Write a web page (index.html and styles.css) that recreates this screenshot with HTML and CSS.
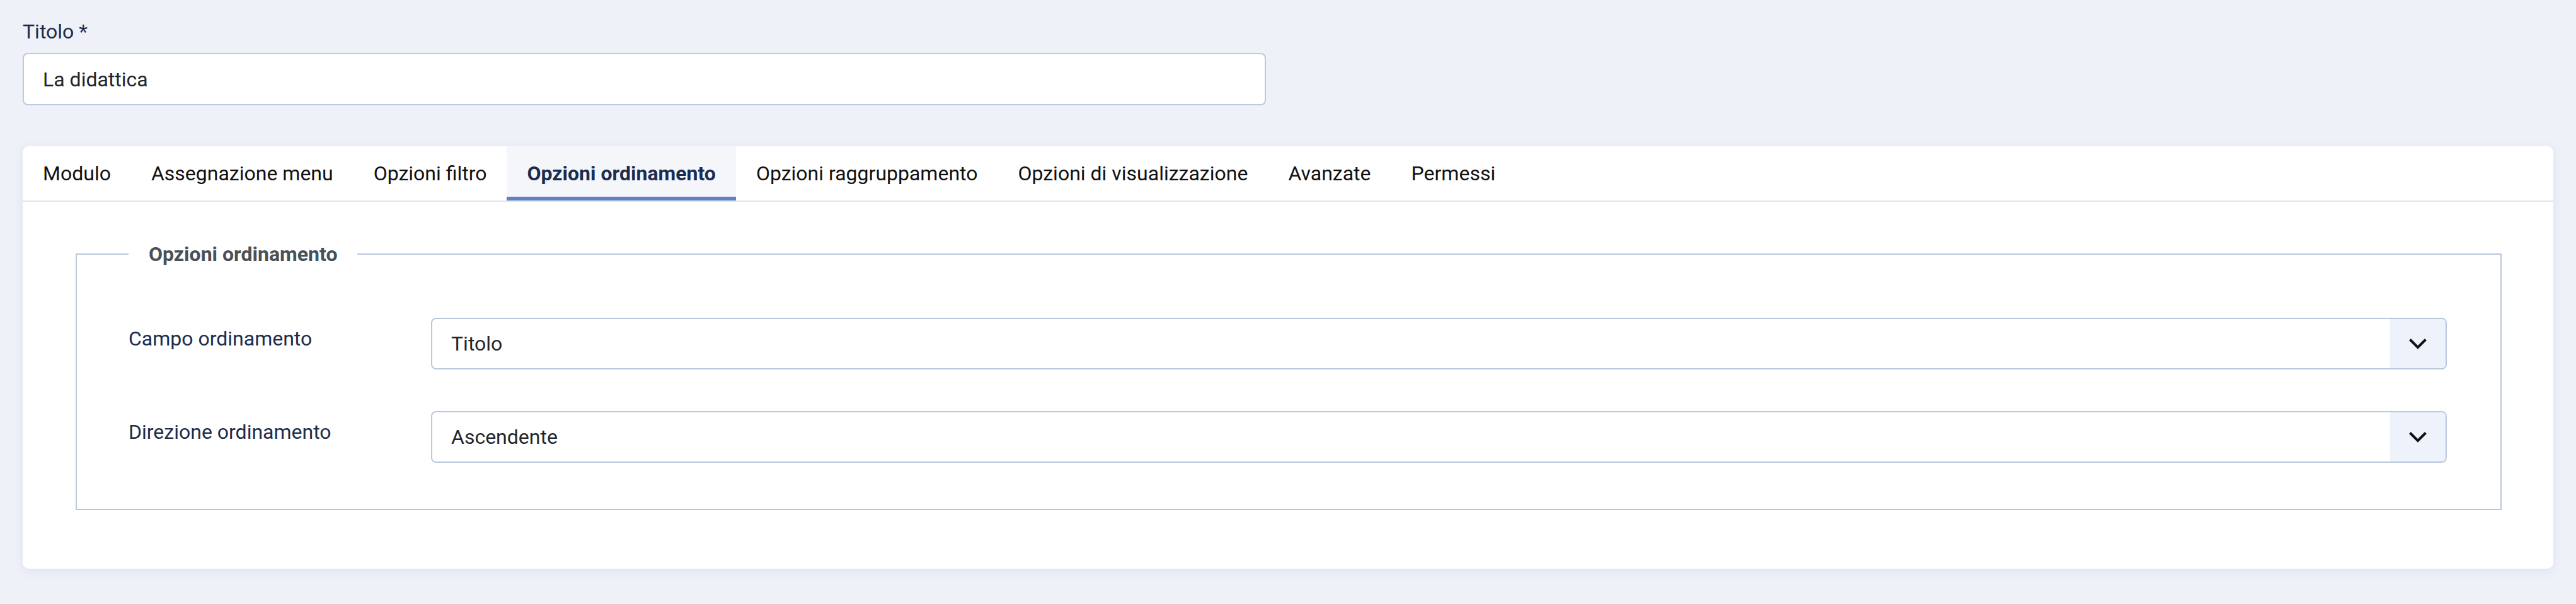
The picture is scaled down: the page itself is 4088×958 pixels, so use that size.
FILE: index.html
```html
<!DOCTYPE html>
<html lang="it">
<head>
<meta charset="utf-8">
<title>Modulo - Opzioni ordinamento</title>
<link rel="stylesheet" href="styles.css">
</head>
<body>
<div class="page">
  <div class="title-field">
    <div class="title-label">Titolo *</div>
    <div class="text-input">La didattica</div>
  </div>

  <section class="card">
    <nav class="tabs">
      <div class="tab">Modulo</div>
      <div class="tab">Assegnazione menu</div>
      <div class="tab">Opzioni filtro</div>
      <div class="tab tab-active">Opzioni ordinamento</div>
      <div class="tab">Opzioni raggruppamento</div>
      <div class="tab">Opzioni di visualizzazione</div>
      <div class="tab">Avanzate</div>
      <div class="tab">Permessi</div>
    </nav>

    <div class="tab-panel">
      <fieldset class="options">
        <legend class="options-legend">Opzioni ordinamento</legend>

        <div class="control-row">
          <div class="control-label">Campo ordinamento</div>
          <div class="select">
            <span class="select-value">Titolo</span>
            <span class="select-btn">
              <svg class="chevron" width="30" height="18" viewBox="0 0 30 18"><path d="M2.5 2.5 L15 15 L27.5 2.5" fill="none" stroke="#111" stroke-width="4"/></svg>
            </span>
          </div>
        </div>

        <div class="control-row">
          <div class="control-label">Direzione ordinamento</div>
          <div class="select">
            <span class="select-value">Ascendente</span>
            <span class="select-btn">
              <svg class="chevron" width="30" height="18" viewBox="0 0 30 18"><path d="M2.5 2.5 L15 15 L27.5 2.5" fill="none" stroke="#111" stroke-width="4"/></svg>
            </span>
          </div>
        </div>
      </fieldset>
    </div>
  </section>
</div>
</body>
</html>
```

FILE: styles.css
```css
html, body {
  margin: 0;
  padding: 0;
}

body {
  background: #eef1f8;
  font-family: Roboto, "Liberation Sans", Arial, sans-serif;
  font-size: 32px;
  line-height: 48px;
  color: #22262a;
}

.page {
  padding: 26px 36px 46px 36px;
}

.title-field {
  margin-bottom: 65px;
}

.title-label {
  color: #1c2c4c;
  margin-bottom: 10px;
}

.text-input {
  box-sizing: border-box;
  width: 1973px;
  height: 83px;
  border: 2px solid #bcc9de;
  border-radius: 8px;
  background: #fff;
  padding: 0 30px;
  display: flex;
  align-items: center;
  color: #22262a;
}

.card {
  background: #fff;
  border-radius: 10px;
  box-shadow: 0 4px 18px rgba(40, 60, 120, 0.08);
  overflow: hidden;
}

.tabs {
  display: flex;
  height: 86px;
  border-bottom: 2px solid #dfe3f0;
}

.tab {
  display: flex;
  align-items: center;
  padding: 0 32px;
  color: #111;
  white-space: nowrap;
  position: relative;
}

.tab-active {
  background: #f4f6fa;
  color: #1a2d51;
  font-weight: 700;
}

.tab-active::after {
  content: "";
  position: absolute;
  left: 0;
  right: 0;
  bottom: 0;
  height: 6px;
  background: #6082c3;
}

.tab-panel {
  padding: 59px 82px 93px 84px;
}

.options {
  margin: 0;
  border: 2px solid #bac7dc;
  padding: 77px 85px 73px 82px;
  min-width: 0;
}

.options-legend {
  padding: 0 32px;
  font-weight: 700;
  color: #495057;
  line-height: 48px;
}

.control-row {
  display: flex;
  align-items: flex-start;
}

.control-row + .control-row {
  margin-top: 66px;
}

.control-label {
  width: 480px;
  flex: none;
  padding-top: 9px;
  color: #1c2c4c;
}

.select {
  flex: 1;
  box-sizing: border-box;
  height: 82px;
  border: 2px solid #bac7dc;
  border-radius: 8px;
  display: flex;
  align-items: stretch;
  overflow: hidden;
}

.select-value {
  flex: 1;
  display: flex;
  align-items: center;
  padding-left: 30px;
  color: #22262a;
}

.select-btn {
  width: 88px;
  flex: none;
  background: #eef2fa;
  display: flex;
  align-items: center;
  justify-content: center;
}

.chevron {
  display: block;
}
```
